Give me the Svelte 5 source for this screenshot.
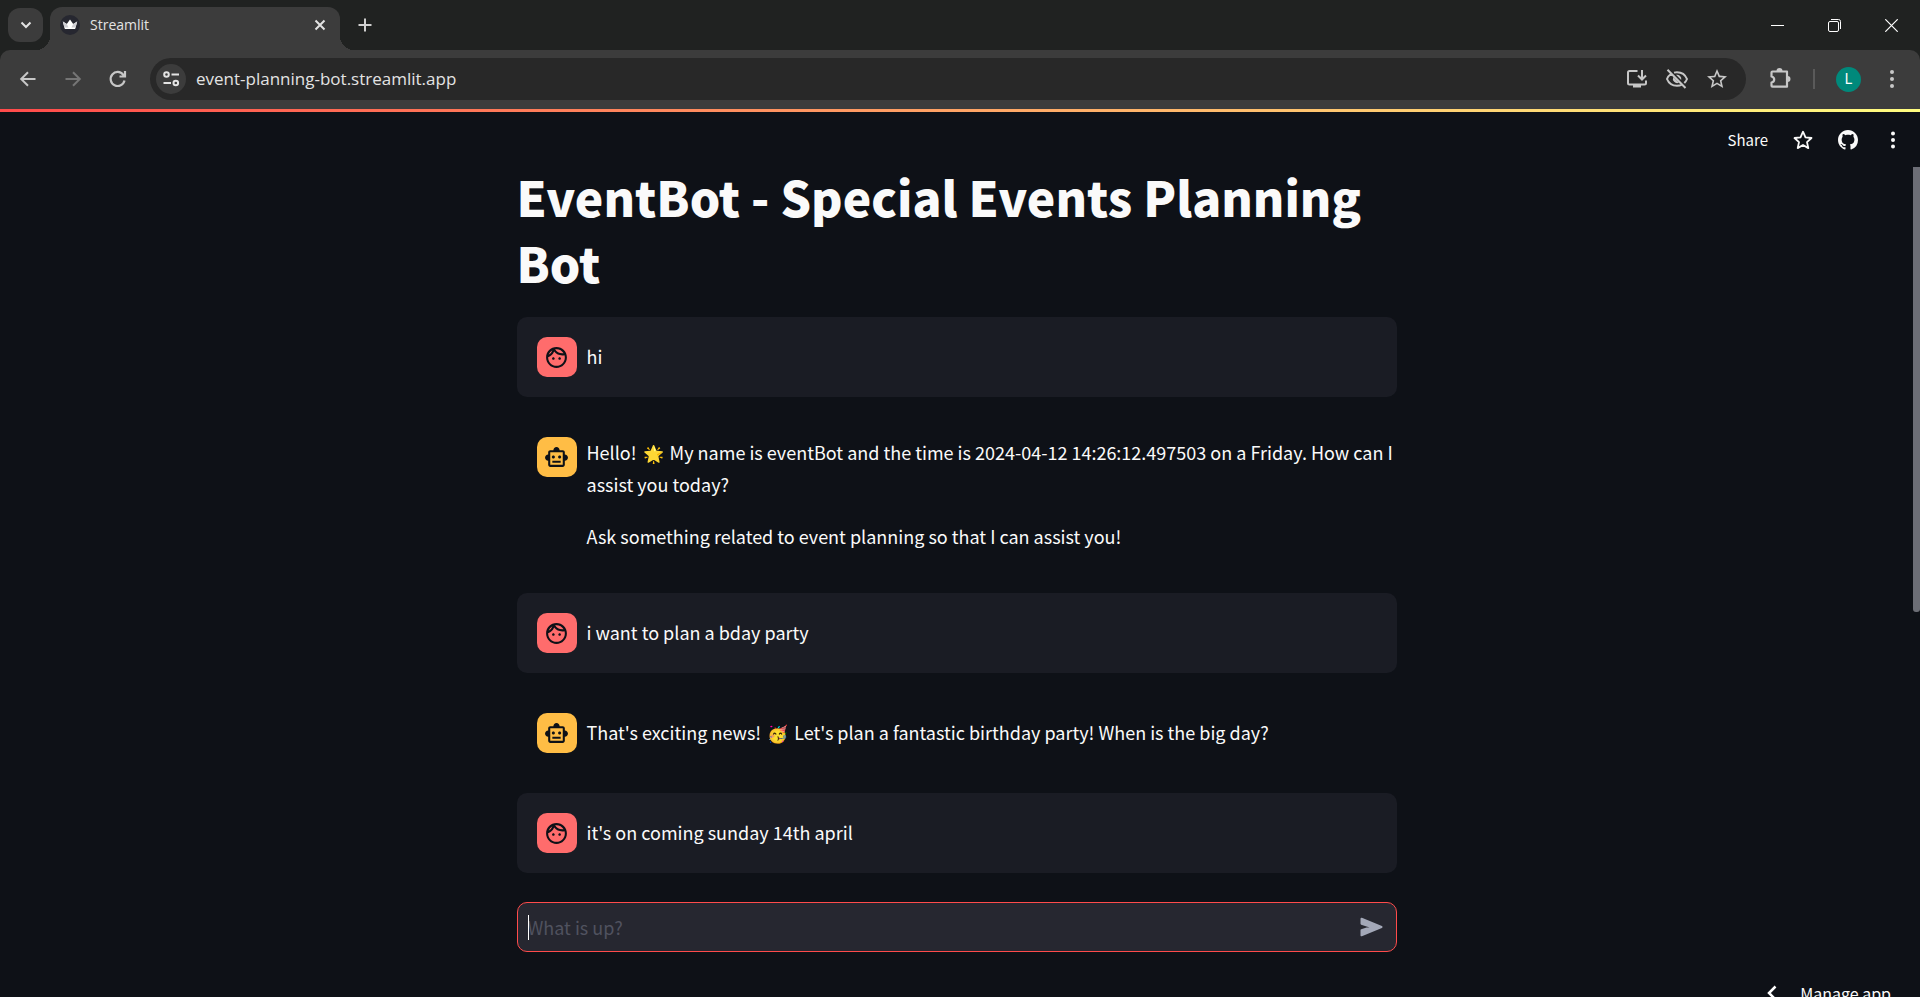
<script>
  const messages = [
    { role: 'user', paragraphs: [['hi']] },
    {
      role: 'bot',
      paragraphs: [
        ['Hello! ', '🌟', ' My name is eventBot and the time is 2024-04-12 14:26:12.497503 on a Friday. How can I assist you today?'],
        ['Ask something related to event planning so that I can assist you!']
      ]
    },
    { role: 'user', paragraphs: [['i want to plan a bday party']] },
    { role: 'bot', paragraphs: [["That's exciting news! ", '🥳', " Let's plan a fantastic birthday party! When is the big day?"]] },
    { role: 'user', paragraphs: [["it's on coming sunday 14th april"]] }
  ];
  let prompt = $state('');
</script>

<div class="window">
  <div class="chrome">
    <header class="tabstrip">
      <button class="tab-search" aria-label="Search tabs">
        <svg width="16" height="16" viewBox="0 0 16 16" fill="none" stroke="#e3e3e3" stroke-width="2"><path d="M3.500 5.500 8 10l4.500-4.500" /></svg>
      </button>
      <div class="tab">
        <svg class="favicon" width="20" height="20" viewBox="0 0 20 20">
          <circle cx="10" cy="10" r="10" fill="#262730" />
          <path d="M2.800 6.500 6.800 9 10 4.500 13.200 9l4-2.500L15.400 13.200q-.2.900-1 .900H5.600q-.8 0-1-.9Z" fill="#fff" />
          <path d="M2.800 6.500 6.800 9 8.600 12.500 4.400 12.500ZM17.200 6.500 13.200 9 11.400 12.500 15.600 12.500Z" fill="#cfcfd4" />
        </svg>
        <span class="tab-title">Streamlit</span>
        <button class="bare" aria-label="Close tab">
          <svg width="12" height="12" viewBox="0 0 12 12" stroke="#e3e3e3" stroke-width="2"><path d="m1.500 1.500 9 9m0-9-9 9" /></svg>
        </button>
      </div>
      <button class="bare new-tab" aria-label="New tab">
        <svg width="14" height="14" viewBox="0 0 14 14" stroke="#d0d0d0" stroke-width="2"><path d="M7 .5v13M.5 7h13" /></svg>
      </button>
      <div class="caption">
        <button class="bare" aria-label="Minimize"><svg width="13" height="13" viewBox="0 0 13 13" fill="#fff"><path d="M0 6h13v1H0z" /></svg></button>
        <button class="bare" aria-label="Restore"><svg width="13" height="13" viewBox="0 0 13 13" fill="none" stroke="#fff"><rect x=".5" y="2.500" width="10" height="10" rx="1.500" /><path d="M3 .5h7.500a2 2 0 0 1 2 2V10" /></svg></button>
        <button class="bare" aria-label="Close"><svg width="13" height="13" viewBox="0 0 13 13" stroke="#fff" stroke-width="1.200"><path d="m.3.3 12.400 12.400m0-12.400L.3 12.700" /></svg></button>
      </div>
    </header>

    <nav class="toolbar">
      <div class="history">
        <button class="bare" aria-label="Back"><svg width="20" height="20" viewBox="0 0 20 20" fill="none" stroke="#c7c7c7" stroke-width="2"><path d="M17.500 10H3.500M10 3.200 3.200 10l6.800 6.800" /></svg></button>
        <button class="bare" aria-label="Forward"><svg width="20" height="20" viewBox="0 0 20 20" fill="none" stroke="#757575" stroke-width="2"><path d="M2.500 10h14M10 3.200l6.800 6.800-6.800 6.800" /></svg></button>
        <button class="bare" aria-label="Reload"><svg width="20" height="20" viewBox="0 0 20 20" fill="none" stroke="#c7c7c7" stroke-width="2.200"><path d="M16.500 11.500a7 7 0 1 1-1.200-5.700L17 7.500M17 2v5.500h-5.500" /></svg></button>
      </div>
      <div class="omnibox">
        <button class="site-info" aria-label="View site information">
          <svg width="18" height="18" viewBox="0 0 18 18" fill="none" stroke="#e3e3e3" stroke-width="2"><circle cx="4.500" cy="4.500" r="2.300" /><path d="M9.500 4.500H17M1.500 13H9" /><circle cx="13.800" cy="13" r="2.300" /></svg>
        </button>
        <input class="url" aria-label="Address" value="event-planning-bot.streamlit.app" />
        <button class="bare" aria-label="Install app"><svg width="24" height="24" viewBox="0 0 24 24" fill="none" stroke="#c7c7c7" stroke-width="2"><path d="M12.500 4H4.500Q3 4 3 5.500v10.500Q3 17.500 4.500 17.500h15q1.500 0 1.500-1.500v-2.500" /><path d="M17 3v9M13 8.500l4 4 4-4" /><path d="M8 17.500h8v3H8z" fill="#c7c7c7" stroke="none" /></svg></button>
        <button class="bare" aria-label="Third-party cookies blocked"><svg width="24" height="24" viewBox="0 0 24 24" fill="none" stroke="#c7c7c7" stroke-width="2"><path d="M9 5.600Q10.500 5.200 12 5.200c5 0 8.500 3 10 6.800q-.9 2.300-2.700 4M6.200 6.700Q3.300 8.700 2 12c1.500 3.800 5 6.800 10 6.800q2.700 0 5-1.100M2.500 2.800l18 18.200" /><path d="M8.300 10a4.300 4.300 0 0 0 5.700 5.700zM11 7.800a4.300 4.300 0 0 1 5.200 5.200z" fill="#c7c7c7" stroke="none" /></svg></button>
        <button class="bare" aria-label="Bookmark this tab"><svg width="24" height="24" viewBox="0 0 24 24" fill="#c7c7c7"><path d="m22 9.240-7.190-.62L12 2 9.190 8.630 2 9.240l5.460 4.730L5.820 21 12 17.270 18.180 21l-1.630-7.030zM12 15.400l-3.760 2.270 1-4.280-3.320-2.880 4.380-.38L12 6.100l1.710 4.040 4.380.38-3.320 2.880 1 4.280z" /></svg></button>
      </div>
      <div class="actions">
        <button class="bare" aria-label="Extensions"><svg width="24" height="24" viewBox="0 0 24 24" fill="none" stroke="#c7c7c7" stroke-width="2.200"><path d="M4.500 4.500H19v15.200H4.500Q3.500 19.700 3.500 18.700V15.500q2.700-.6 2.700-3t-2.700-3V5.500q0-1 1-1Z" stroke-linejoin="round" /><path d="M8.500 4a3 3 0 0 1 6 0zM19.500 9a3 3 0 0 1 0 6z" fill="#c7c7c7" stroke="none" /></svg></button>
        <span class="divider"></span>
        <button class="profile" aria-label="Profile L">L</button>
        <button class="bare" aria-label="Browser menu"><svg width="20" height="20" viewBox="0 0 20 20" fill="#c7c7c7"><circle cx="10" cy="3" r="2" /><circle cx="10" cy="10" r="2" /><circle cx="10" cy="17" r="2" /></svg></button>
      </div>
    </nav>
  </div>

  <div class="decoration"></div>

  <div class="app">
    <div class="app-toolbar">
      <button class="bare share">Share</button>
      <button class="bare" aria-label="Favorite"><svg width="20" height="20" viewBox="0 0 20 20" fill="none" stroke="#fafafa" stroke-width="1.800" stroke-linejoin="round"><path d="m10 1.700 2.500 5.700 6 .6-4.500 4.100 1.300 6-5.300-3.100-5.300 3.100 1.300-6L1.500 8l6-.6Z" /></svg></button>
      <a class="bare" href="#github" aria-label="View source on GitHub"><svg width="20" height="20" viewBox="0 0 16 16" fill="#fafafa"><path d="M8 0C3.580 0 0 3.580 0 8c0 3.540 2.290 6.530 5.470 7.590.4.070.55-.17.55-.38 0-.19-.01-.82-.01-1.490-2.010.37-2.530-.49-2.690-.94-.09-.23-.48-.94-.82-1.130-.28-.15-.68-.52-.01-.53.63-.01 1.080.58 1.230.82.720 1.210 1.870.87 2.330.66.070-.52.280-.87.510-1.070-1.780-.2-3.640-.89-3.640-3.950 0-.87.310-1.590.820-2.150-.08-.2-.36-1.020.08-2.120 0 0 .67-.21 2.200.82.640-.18 1.320-.27 2-.27s1.360.09 2 .27c1.530-1.040 2.200-.82 2.200-.82.440 1.100.16 1.920.08 2.120.51.560.82 1.270.82 2.150 0 3.070-1.870 3.750-3.650 3.950.29.25.54.73.54 1.480 0 1.070-.01 1.930-.01 2.200 0 .21.15.46.55.38A8.010 8.010 0 0 0 16 8c0-4.420-3.580-8-8-8" /></svg></a>
      <button class="bare" aria-label="App menu"><svg width="20" height="20" viewBox="0 0 20 20" fill="#fafafa"><circle cx="10" cy="3.500" r="2" /><circle cx="10" cy="10" r="2" /><circle cx="10" cy="16.500" r="2" /></svg></button>
    </div>

    <div class="scroll-track"><div class="scroll-thumb"></div></div>

    <div class="view">
      <main class="column">
        <h1>EventBot - Special Events Planning Bot</h1>
        {#each messages as message}
          <article class="message {message.role}">
            <div class="avatar">
              {#if message.role === 'user'}
                <svg width="25" height="25" viewBox="0 0 24 24" fill="#0e1117"><path d="M10.250 13c0 .69-.56 1.250-1.250 1.250S7.750 13.690 7.750 13s.56-1.250 1.250-1.250 1.250.56 1.250 1.250zM15 11.750c-.69 0-1.250.56-1.250 1.250s.56 1.250 1.250 1.250 1.250-.56 1.250-1.250-.56-1.250-1.250-1.250zm7 .25c0 5.520-4.480 10-10 10S2 17.520 2 12 6.480 2 12 2s10 4.480 10 10zM10.660 4.120C12.060 6.440 14.600 8 17.500 8c.46 0 .91-.05 1.340-.12C17.440 5.560 14.900 4 12 4c-.46 0-.91.05-1.340.12zM4.420 9.470a8.046 8.046 0 0 0 3.660-4.440 8.046 8.046 0 0 0-3.660 4.440zM20 12c0-.78-.12-1.530-.33-2.240-.7.150-1.420.24-2.170.24a9.974 9.974 0 0 1-7.760-3.690A10.016 10.016 0 0 1 4 11.860c.01.04 0 .09 0 .14 0 4.410 3.590 8 8 8s8-3.590 8-8z" /></svg>
              {:else}
                <svg width="25" height="25" viewBox="0 0 24 24" fill="#0e1117"><path d="M20 9V7c0-1.100-.9-2-2-2h-3c0-1.660-1.340-3-3-3S9 3.340 9 5H6c-1.100 0-2 .9-2 2v2c-1.660 0-3 1.340-3 3s1.340 3 3 3v4c0 1.100.9 2 2 2h12c1.100 0 2-.9 2-2v-4c1.660 0 3-1.340 3-3s-1.340-3-3-3zm-2 10H6V7h12v12zm-9-6c-.83 0-1.500-.67-1.500-1.500S8.170 10 9 10s1.500.67 1.500 1.500S9.830 13 9 13zm7.500-1.500c0 .83-.67 1.500-1.500 1.500s-1.500-.67-1.500-1.500.67-1.500 1.500-1.500 1.500.67 1.500 1.500zM8 15h8v2H8v-2z" /></svg>
              {/if}
            </div>
            <div class="body">
              {#each message.paragraphs as [before, emoji, after]}
                <p>{before}{#if emoji}<span class="emoji">{emoji}</span>{after}{/if}</p>
              {/each}
            </div>
          </article>
        {/each}

        <form class="chat-input" onsubmit={(e) => e.preventDefault()}>
          <span class="caret"></span>
          <input bind:value={prompt} placeholder="What is up?" aria-label="Message" />
          <button class="bare" aria-label="Send"><svg width="23" height="20" viewBox="0 0 23 20" fill="#a3a8b8" stroke="#a3a8b8" stroke-width="2" stroke-linejoin="round"><path d="M1.500 1.700 21.500 10 1.500 18.300V13.200L11.500 10 1.500 6.800Z" /></svg></button>
        </form>
      </main>
    </div>

    <button class="bare manage">
      <svg width="10" height="16" viewBox="0 0 10 16" fill="none" stroke="#fff" stroke-width="2.500"><path d="M8.500 1.500 2 8l6.500 6.500" /></svg>
      <span>Manage app</span>
    </button>
  </div>
</div>

<style>
  :global(body) {
    margin: 0;
    background: #0e1117;
  }
  .window {
    height: 100vh;
    display: flex;
    flex-direction: column;
    overflow: hidden;
    background: #0e1117;
    color: #fafafa;
    font-family: "Noto Sans CJK SC", "Noto Sans", sans-serif;
  }
  button, input {
    font: inherit;
    color: inherit;
  }
  svg {
    display: block;
    flex: none;
  }
  .bare {
    display: flex;
    align-items: center;
    padding: 0;
    border: 0;
    background: none;
    color: inherit;
  }

  .chrome {
    flex: none;
    background: #202221;
    font-family: "Open Sans", sans-serif;
  }
  .tabstrip {
    display: flex;
    align-items: center;
    height: 50px;
    padding-left: 8px;
  }
  .tab-search {
    display: grid;
    place-items: center;
    width: 35px;
    height: 34px;
    padding: 0;
    border: 0;
    border-radius: 12px;
    background: #3c3c3c;
  }
  .tab {
    position: relative;
    display: flex;
    align-items: center;
    align-self: flex-end;
    gap: 10px;
    box-sizing: border-box;
    width: 290px;
    height: 43px;
    margin-left: 7px;
    padding: 0 14px 7px 10px;
    border-radius: 12px 12px 0 0;
    background: #3c3c3c;
  }
  .tab::before,
  .tab::after {
    content: "";
    position: absolute;
    bottom: 0;
    width: 14px;
    height: 14px;
  }
  .tab::before {
    right: 100%;
    background: radial-gradient(circle at 0 0, transparent 14px, #3c3c3c 14px);
  }
  .tab::after {
    left: 100%;
    background: radial-gradient(circle at 100% 0, transparent 14px, #3c3c3c 14px);
  }
  .tab-title {
    flex: 1;
    font-size: 14px;
    line-height: 20px;
    color: #e3e3e3;
  }
  .new-tab {
    margin-left: 18px;
  }
  .caption {
    display: flex;
    gap: 44px;
    margin-left: auto;
    padding-right: 22px;
  }

  .toolbar {
    display: flex;
    align-items: center;
    gap: 22px;
    box-sizing: border-box;
    height: 59px;
    padding: 0 18px 1px;
    border-radius: 10px 10px 0 0;
    background: #3c3c3c;
  }
  .history {
    display: flex;
    align-items: center;
    gap: 25px;
  }
  .actions {
    display: flex;
    align-items: center;
    gap: 21px;
  }
  .omnibox {
    display: flex;
    align-items: center;
    flex: 1;
    gap: 16px;
    height: 42px;
    padding: 0 17px 0 6px;
    border-radius: 21px;
    background: #282828;
  }
  .site-info {
    display: grid;
    place-items: center;
    width: 30px;
    height: 30px;
    margin-right: -6px;
    padding: 0;
    border: 0;
    border-radius: 50%;
    background: #3c3c3c;
  }
  .url {
    flex: 1;
    min-width: 0;
    padding: 0;
    border: 0;
    background: none;
    outline: none;
    font-size: 17px;
    line-height: 24px;
    color: #e3e3e3;
  }
  .divider {
    width: 2px;
    height: 20px;
    background: #5a5a5a;
  }
  .profile {
    width: 25px;
    height: 25px;
    padding: 0;
    border: 0;
    border-radius: 50%;
    background: #00897b;
    color: #fff;
    font-family: Roboto, sans-serif;
    font-size: 14px;
    line-height: 25px;
    text-align: center;
  }
  .decoration {
    flex: none;
    height: 3px;
    background: linear-gradient(90deg, #ff4b4b, #fffd80);
  }

  .app {
    position: relative;
    display: flex;
    flex-direction: column;
    flex: 1;
    min-height: 0;
  }
  .app-toolbar {
    display: flex;
    align-items: center;
    justify-content: flex-end;
    gap: 25px;
    flex: none;
    height: 55px;
    padding-right: 17px;
  }
  .share {
    font-size: 15px;
    line-height: 24px;
  }
  .scroll-track {
    position: absolute;
    top: 55px;
    right: 0;
    bottom: 0;
    width: 7px;
  }
  .scroll-thumb {
    height: calc(54% - 3px);
    border-radius: 0 0 3px 3px;
    background: #6c6e76;
  }
  .view {
    margin-top: -4px;
    padding-right: 7px;
  }
  .column {
    display: flex;
    flex-direction: column;
    gap: 20px;
    width: 100%;
    max-width: 880px;
    margin: 0 auto;
  }
  h1 {
    margin: 0;
    padding-bottom: 2px;
    font-size: 48px;
    line-height: 66px;
    font-weight: 900;
  }
  .message {
    display: flex;
    align-items: center;
    gap: 10px;
    padding: 20px 0 20px 20px;
    border-radius: 10px;
  }
  .message.user {
    background: #1a1c24;
  }
  .avatar {
    display: grid;
    place-items: center;
    align-self: flex-start;
    flex: none;
    width: 40px;
    height: 40px;
    border-radius: 10px;
    background: #ffbd45;
  }
  .user .avatar {
    background: #ff6c6c;
  }
  .body {
    display: flex;
    flex-direction: column;
    gap: 20px;
    flex: 1;
    margin: -1px 0 1px;
  }
  .body p {
    margin: 0;
    font-size: 18px;
    line-height: 32px;
  }
  .emoji {
    padding: 0 2px;
    font-size: 17px;
    line-height: 1;
  }
  .chat-input {
    position: relative;
    display: flex;
    align-items: center;
    box-sizing: border-box;
    height: 50px;
    margin-top: 9px;
    padding: 0 13px 0 10px;
    border: 1px solid #ff4b4b;
    border-radius: 10px;
    background: #262730;
  }
  .chat-input input {
    flex: 1;
    min-width: 0;
    padding: 0;
    border: 0;
    background: none;
    outline: none;
    font-size: 18px;
    line-height: 30px;
  }
  .chat-input input::placeholder {
    color: #50525f;
    opacity: 1;
  }
  .caret {
    position: absolute;
    left: 10px;
    width: 1px;
    height: 25px;
    background: #fff;
  }
  .manage {
    position: absolute;
    right: 29px;
    bottom: -10px;
    gap: 23px;
    font-size: 16px;
    line-height: 28px;
  }
</style>
